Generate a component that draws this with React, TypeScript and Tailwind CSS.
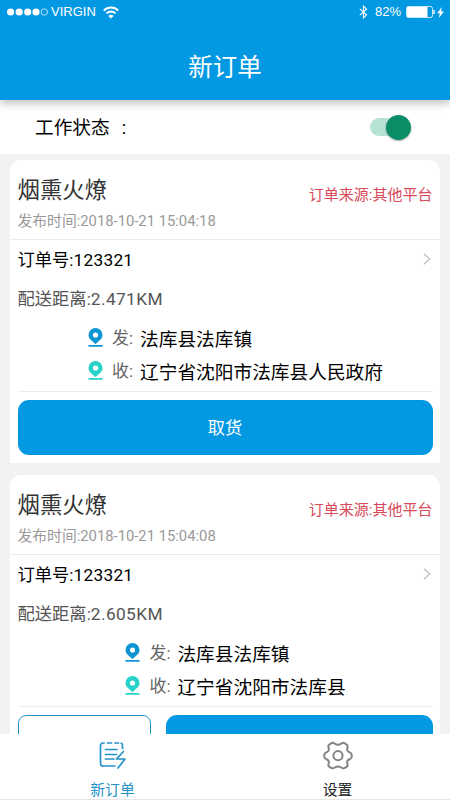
import type { ReactNode } from "react";

type Order = {
  id: string;
  shop: string;
  source: string;
  publishedAt: string;
  orderNo: string;
  distance: string;
  from: string;
  to: string;
  action?: string;
};

const orders: Order[] = [
  {
    id: "1",
    shop: "烟熏火燎",
    source: "其他平台",
    publishedAt: "2018-10-21 15:04:18",
    orderNo: "123321",
    distance: "2.471KM",
    from: "法库县法库镇",
    to: "辽宁省沈阳市法库县人民政府",
    action: "取货",
  },
  {
    id: "2",
    shop: "烟熏火燎",
    source: "其他平台",
    publishedAt: "2018-10-21 15:04:08",
    orderNo: "123321",
    distance: "2.605KM",
    from: "法库县法库镇",
    to: "辽宁省沈阳市法库县",
  },
];

function StatusBar() {
  return (
    <div className="flex h-6 items-center justify-between pl-[7px] pr-[6px] font-['Liberation_Sans',sans-serif] text-white">
      <div className="flex items-center">
        <svg width="42" height="8" viewBox="0 0 42 8" fill="currentColor">
          <circle cx="3.6" cy="4" r="3.6" />
          <circle cx="12.2" cy="4" r="3.6" />
          <circle cx="20.7" cy="4" r="3.6" />
          <circle cx="29" cy="4" r="3.6" />
          <circle cx="37.3" cy="4" r="3.2" fill="none" stroke="currentColor" strokeWidth="0.7" />
        </svg>
        <span className="ml-[2px] w-[46px] whitespace-nowrap text-[13px]">VIRGIN</span>
        <svg className="ml-[6px]" width="16" height="13" viewBox="0 0 16 13" fill="none" stroke="currentColor" strokeWidth="2">
          <path d="M0.8 4.6a10.2 10.2 0 0 1 14.4 0" />
          <path d="M3.5 7.4a6.4 6.4 0 0 1 9 0" />
          <path d="M8 12.6 5.4 10a3.7 3.7 0 0 1 5.2 0Z" fill="currentColor" stroke="none" />
        </svg>
      </div>
      <div className="flex items-center">
        <svg width="9" height="14" viewBox="0 0 9 14" fill="none" stroke="currentColor" strokeWidth="1.1">
          <path d="M0.8 3.8 7.6 9.8 4.5 12.8V1.2l3.1 3L0.8 10.2" />
        </svg>
        <span className="ml-[7px] w-[28px] whitespace-nowrap text-[13px]">82%</span>
        <svg className="ml-[3px]" width="29" height="12" viewBox="0 0 29 12" fill="none" stroke="currentColor">
          <rect x="0.5" y="0.5" width="26" height="11" rx="2" strokeWidth="0.8" />
          <rect x="1" y="1" width="20.5" height="10" fill="currentColor" stroke="none" />
          <path d="M28 4v4" strokeWidth="1.4" />
        </svg>
        <svg className="ml-[2px]" width="7" height="11" viewBox="0 0 7 11" fill="currentColor">
          <path d="M5 0 0 6.2h2.8L1.8 11 7 4.6H4Z" />
        </svg>
      </div>
    </div>
  );
}

function WorkToggle() {
  return (
    <div className="flex h-[18px] w-[40px] items-center justify-end rounded-full bg-[#b5e2d5]">
      <span className="-mr-px size-[25px] shrink-0 rounded-full bg-[#0b8d67] shadow-[0_1px_2px_rgba(0,0,0,0.35)]" />
    </div>
  );
}

function Pin({ color }: { color: string }) {
  return (
    <svg width="15" height="19" viewBox="0 0 15 19" fill={color}>
      <path
        fillRule="evenodd"
        d="M7.5 0a7 7 0 0 1 7 7c0 3.6-2.7 5.2-4.5 6.7-1 .9-1.8 2-2.5 2.3-.7-.3-1.5-1.4-2.5-2.3C3.2 12.2.5 10.6.5 7a7 7 0 0 1 7-7Zm0 4.4a2.6 2.6 0 1 0 0 5.2 2.6 2.6 0 0 0 0-5.2Z"
      />
      <rect x="0.3" y="17" width="14.4" height="1.8" rx="0.9" />
    </svg>
  );
}

function RouteRow({ color, label, address }: { color: string; label: string; address: string }) {
  return (
    <div className="flex h-[33px] items-center">
      <Pin color={color} />
      <span className="ml-[9px] w-[28px] whitespace-nowrap pt-[2px] text-[17px] text-[#666]">{label}:</span>
      <span className="whitespace-nowrap pt-[5px] text-[18.7px] text-black">{address}</span>
    </div>
  );
}

function OrderCard({ order }: { order: Order }) {
  return (
    <li className="flex h-[302.5px] shrink-0 flex-col rounded-t-[11px] bg-white">
      <div className="flex h-[80px] items-center justify-between border-b border-[#ebebeb] px-[7.5px]">
        <div className="pt-[9px]">
          <h2 className="text-[22.4px] leading-[34px] text-[#333]">{order.shop}</h2>
          <p className="pt-px text-[14.8px] leading-[27px] text-[#999]">发布时间:{order.publishedAt}</p>
        </div>
        <p className="pb-[8px] text-[15px] text-[#d64a5a]">订单来源:{order.source}</p>
      </div>

      <div className="flex h-[40px] items-center justify-between pl-[7.5px] pr-[9px]">
        <p className="pt-px text-[17.3px] text-black">
          订单号:<span className="tracking-[0.25px]">{order.orderNo}</span>
        </p>
        <svg className="-mt-[2px]" width="8" height="12" viewBox="0 0 8 12" fill="none" stroke="#bbb" strokeWidth="1.2">
          <path d="m0.8 0.8 6 5.2-6 5.2" />
        </svg>
      </div>
      <p className="h-[41px] px-[7.5px] text-[17.3px] leading-[38px] text-[#555]">
        配送距离:<span className="tracking-[0.4px]">{order.distance}</span>
      </p>

      <div className="flex justify-center pl-[21px]">
        <div>
          <RouteRow color="#0d95d3" label="发" address={order.from} />
          <RouteRow color="#27d3c8" label="收" address={order.to} />
        </div>
      </div>

      <div className="mx-[7.5px] mt-[4px] flex gap-[15px] border-t border-[#e8edf0] pt-[8px]">
        {!order.action && (
          <button className="h-[55px] w-[133.5px] shrink-0 rounded-[8px] border-[1.5px] border-[#2591c6]" />
        )}
        <button className="h-[55px] flex-1 rounded-[11px] bg-[#0398e2] pt-[3px] text-[17.2px] text-white">
          {order.action}
        </button>
      </div>
    </li>
  );
}

function Tab({ label, active, children }: { label: string; active?: boolean; children: ReactNode }) {
  return (
    <button
      className={`flex flex-1 flex-col items-center justify-start pt-[7px] ${active ? "text-[#2591c6]" : "text-[#222]"}`}
    >
      {children}
      <span className="mt-[11px] text-[14.8px] leading-[18px]">{label}</span>
    </button>
  );
}

export default function App() {
  return (
    <div className="flex h-[800px] w-[450px] flex-col overflow-hidden bg-[#f2f2f2] font-['Roboto','Noto_Sans_CJK_SC',sans-serif]">
      <header className="relative z-10 h-[100px] shrink-0 bg-[#0398e2] shadow-[0_4px_8px_rgba(0,0,0,0.22)]">
        <StatusBar />
        <h1 className="pt-[25px] text-center text-[24.5px] leading-[38px] text-white">新订单</h1>
      </header>

      <div className="flex h-[54px] shrink-0 items-center justify-between bg-white pl-[35px] pr-[40px]">
        <p className="pt-[2px] text-[18.7px] text-black">
          工作状态<span className="ml-[12px]">:</span>
        </p>
        <WorkToggle />
      </div>

      <ul className="flex min-h-0 flex-1 flex-col gap-[12.5px] overflow-hidden px-[10px] pt-[6px]">
        {orders.map((order) => (
          <OrderCard key={order.id} order={order} />
        ))}
      </ul>

      <nav className="flex h-[66px] shrink-0 border-b border-[#e5e5e5] bg-white">
        <Tab label="新订单" active>
          <svg className="shrink-0" width="28" height="29" viewBox="0 0 28 29" fill="none" stroke="currentColor" strokeWidth="1.7" strokeLinecap="round" strokeLinejoin="round">
            <path d="M5 2H4a2.5 2.5 0 0 0-2.5 2.500v18A2.5 2.5 0 0 0 4 25h12M8.500 2h4M16 2h3.500M22.200 2.200c.9.3 1.300 1 1.300 2.300v3" />
            <path d="M6.500 8.500h11.500M6.500 13.500h11M6.500 18h8.500" />
            <path d="m24.500 10.500-7 7.500H26l-7 9" />
          </svg>
        </Tab>
        <Tab label="设置">
          <svg className="shrink-0 text-[#858585]" width="30" height="29" viewBox="0 0 30 29" fill="none" stroke="currentColor" strokeWidth="2" strokeLinejoin="round">
            <path d="M9.5 1.800c2 0 2.800 2 5.500 2s3.500-2 5.500-2c1.500.5 3 1.400 4 2.500.7 2-1 3-.2 5 .9 2 3.700 2 4.200 3.700.4 1.500.2 2.700 0 3.500-.5 1.700-3.300 1.700-4.200 3.500-.8 2 .9 3 .2 5-1 1-2.500 2-4 2.400-2 0-2.800-2-5.500-2s-3.500 2-5.500 2c-1.500-.4-3-1.400-4-2.400-.7-2 1-3 .2-5-.9-1.800-3.700-1.800-4.200-3.500-.2-1-.4-2 0-3.500.5-1.700 3.300-1.700 4.200-3.700.8-2-.9-3-.2-5 1-1.100 2.500-2 4-2.500Z" />
            <circle cx="15" cy="14.6" r="4.6" />
          </svg>
        </Tab>
      </nav>
    </div>
  );
}
